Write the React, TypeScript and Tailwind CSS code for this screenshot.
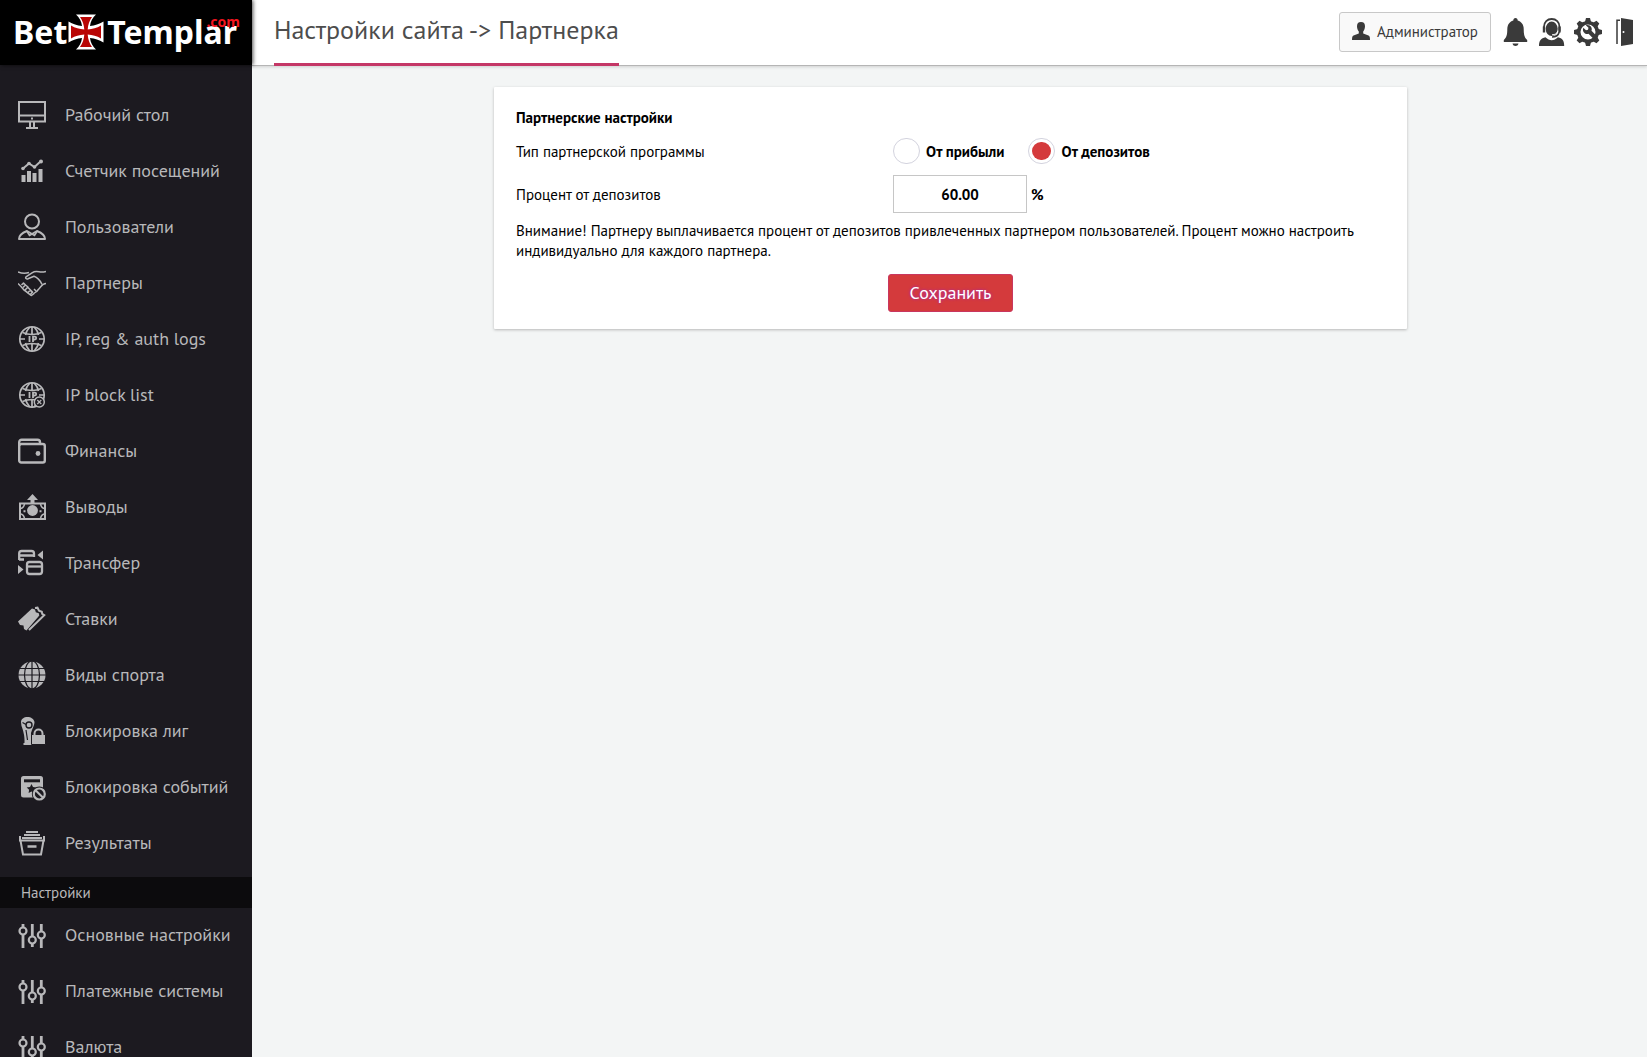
import { useState, type ReactNode } from "react";

// ─── Icons ───────────────────────────────────────────────────────────────────
function Icon({ children }: { children: ReactNode }) {
  return (
    <svg
      viewBox="0 0 28 28"
      className="size-7 shrink-0"
      fill="none"
      stroke="currentColor"
      strokeWidth="2"
      aria-hidden="true"
    >
      {children}
    </svg>
  );
}

function DesktopIcon() {
  return (
    <Icon>
      <path d="M1 1h26v19.5H1zM1 14.5h26" />
      <path d="M12 21v5M16 21v5M8 27h12M14 16.5v2" />
    </Icon>
  );
}

function CounterIcon() {
  return (
    <Icon>
      <path d="M5.5 18v7M11 14v11M16.5 16v9M22.5 12v13" strokeWidth="4" />
      <path d="M5 11.5l6-5 5.5 3.5 6.5-6" />
      <g fill="currentColor" stroke="none">
        <circle cx="5" cy="11.5" r="1.8" />
        <circle cx="11" cy="6.5" r="1.8" />
        <circle cx="16.5" cy="10" r="1.8" />
        <circle cx="23" cy="4.5" r="2" />
      </g>
    </Icon>
  );
}

function UsersIcon() {
  return (
    <Icon>
      <circle cx="14" cy="8.5" r="7" />
      <path d="M1 26c0-4 3-6 8-8l5 3 5-3c5 2 8 4 8 8z" strokeLinejoin="round" />
      <path d="M9 18.5l2.5 4L14 21l2.5 1.5 2.5-4" strokeWidth="1.5" />
    </Icon>
  );
}

function PartnersIcon() {
  return (
    <Icon>
      <g strokeWidth="1.5" strokeLinejoin="round">
        <path d="M0 3c4 1.5 8 1.5 11 .5M28 2.500c-3 .8-5 .8-7 .3-3-.8-5-.3-7 1l-6 4c-1 1.500.5 2.500 2 2l6-2.500c3 1 6 4 8 8" />
        <path d="M28 14.500c-3 0-4 1.500-5.500 3.500s-2 2-3 3.500-3 2-4 3.500l-2 1.500c-2-1-5-4-7.500-5.500L3 17.500 0 14.500" />
        <path d="M3.500 16l2-2 2 2-2.500 2.500M7.500 16l2.500 2-3 3M10 18.500l2.500 2.500-3 3M12.500 21l2 2-2.500 3M15 24l-2-2M18 22l-2-2" />
      </g>
    </Icon>
  );
}

function IpGlobe() {
  return (
    <>
      <g strokeWidth="1.7">
        <circle cx="14" cy="14" r="12.2" />
        <path d="M14 2v7M14 19v7M2 14h5M21 14h5M4.500 7.500c6 2.500 13 2.500 19 0M4.500 20.500c6-2.500 13-2.500 19 0" />
        <path d="M11.500 2.500C9 5 8 7 7.500 10M16.500 2.500C19 5 20 7 20.500 10M7.500 18c.5 3 1.500 5 4 7.500M20.500 18c-.5 3-1.500 5-4 7.500" />
      </g>
      <path d="M11.5 11v6M15 17v-5.300h1.800a1.300 1.300 0 010 2.800H15" strokeWidth="1.8" />
    </>
  );
}

function IpLogsIcon() {
  return (
    <Icon>
      <IpGlobe />
    </Icon>
  );
}

function IpBlockIcon() {
  return (
    <Icon>
      <IpGlobe />
      <circle cx="21.3" cy="21" r="5" fill="#1c1a20" strokeWidth="1.5" />
      <path d="M19.300 19l4 4M23.300 19l-4 4" strokeWidth="1.2" />
    </Icon>
  );
}

function WalletIcon() {
  return (
    <Icon>
      <g strokeWidth="2.4">
        <rect x="1.2" y="7" width="25.6" height="18.5" rx="2" />
        <path d="M1.200 9V5.200a2.500 2.500 0 012.500-2.500H19.500A2.500 2.500 0 0122 5.200V7" />
      </g>
      <circle cx="20" cy="16.5" r="2.4" fill="currentColor" stroke="none" />
    </Icon>
  );
}

function PayoutIcon() {
  return (
    <Icon>
      <rect x="2" y="10.5" width="25" height="15.5" />
      <circle cx="14.5" cy="17.5" r="5.4" fill="currentColor" stroke="none" />
      <path d="M14.500 1l5.500 6h-3.500v4h-4V7H9z" fill="currentColor" stroke="none" />
      <path d="M2 15.500c3 0 4-2 4.500-4.500M27 15.500c-3 0-4-2-4.500-4.500M2 21c3 0 4 2 4.500 4.500M27 21c-3 0-4 2-4.500 4.500" strokeWidth="1.5" />
      <path d="M5.500 18.300h2M21.500 18.300h2" />
    </Icon>
  );
}

function TransferIcon() {
  return (
    <Icon>
      <g strokeWidth="2.3">
        <path d="M1.200 11V4.500A2.500 2.500 0 013.700 2h9.800A2.500 2.500 0 0116 4.500V8M1 6.500h15M1 10.500h5" />
        <rect x="9" y="13" width="15" height="12" rx="2.5" />
        <path d="M9 17.500h15" />
      </g>
      <path d="M19.500 6L25 1.500v9zM5.500 20.500L0 16v9z" fill="currentColor" stroke="none" />
    </Icon>
  );
}

function TicketIcon() {
  return (
    <Icon>
      <path d="M0 16.500L14 3.500l3 1 .8 2.800 3 1 .5 2.200L8.500 25.500l-2.500-1.500-.5-3.500-3.500-.5z" fill="currentColor" stroke="none" />
      <path d="M17 3l2.500-.3 1.500 3 2.800 1 .4 2.200 2 1.200L11 25" strokeWidth="2" />
    </Icon>
  );
}

function SportIcon() {
  return (
    <Icon>
      <circle cx="14" cy="14" r="13.5" fill="currentColor" stroke="none" />
      <g stroke="#1c1a20" strokeWidth="1.2">
        <path d="M14 0v28M0 14h28M2 7.500h24M2 20.500h24" />
        <ellipse cx="14" cy="14" rx="7.5" ry="14" />
      </g>
    </Icon>
  );
}

function LeagueBlockIcon() {
  return (
    <Icon>
      <path d="M3 5c0-3 3-5 6.500-5S16 2 16.500 5c0 3-1.500 5-2.500 8l-1 3v10h1v2H5.500v-2h1C7 19 5 13 3.500 9z" fill="currentColor" stroke="none" />
      <circle cx="11" cy="8" r="3" stroke="#1c1a20" strokeWidth="1.4" />
      <path d="M4.500 5.500l3.500 2M8 13l1.500 10" stroke="#1c1a20" strokeWidth="1.2" />
      <path d="M13.500 17.500h14v10h-14z" fill="currentColor" stroke="#1c1a20" strokeWidth="1" />
      <path d="M16.500 18v-1.500a4 4 0 018 0V18" />
    </Icon>
  );
}

function EventBlockIcon() {
  return (
    <Icon>
      <rect x="3" y="3" width="22" height="21.5" rx="2.5" fill="currentColor" stroke="none" />
      <path d="M6 7.800h16" stroke="#1c1a20" strokeWidth="3" />
      <path d="M13.500 11l1.500 3 3.300.4-2.400 2.300.5 3.300-2.900-1.600-2.900 1.600.5-3.300-2.400-2.300 3.300-.4z" fill="#1c1a20" stroke="none" />
      <circle cx="21.3" cy="21" r="7.5" fill="#1c1a20" stroke="none" />
      <circle cx="21.3" cy="21" r="5.5" strokeWidth="2.2" />
      <path d="M17.500 17.200l7.600 7.600" />
    </Icon>
  );
}

function ResultsIcon() {
  return (
    <Icon>
      <path d="M8 3h12M6 6h16M4 9h20" strokeWidth="1.8" />
      <path d="M2 7v4.500h24V7M2.500 11.500L5 25.500h18l2.500-14" />
      <path d="M9.500 17.500h9" strokeWidth="2.5" />
    </Icon>
  );
}

function SlidersIcon() {
  return (
    <Icon>
      <path d="M5 3v3.500M5 13.500V27M14.300 3v12.500M14.300 22.500V26M23.300 3v7.500M23.300 17.500V27" strokeWidth="2.8" />
      <g strokeWidth="2.2">
        <circle cx="5" cy="10" r="3.5" />
        <circle cx="14.3" cy="19" r="3.5" />
        <circle cx="23.3" cy="14" r="3.5" />
      </g>
    </Icon>
  );
}

function BellIcon() {
  return (
    <Icon>
      <g fill="currentColor" stroke="none">
        <path d="M13.500 0c1.400 0 2.200.9 2.200 2.400 4 1.300 6 4.300 6 8.600 0 6 .8 8.500 3.500 11v2H1.800v-2c2.700-2.500 3.500-5 3.500-11 0-4.300 2-7.300 6-8.600C11.300.9 12.100 0 13.500 0z" />
        <path d="M10.500 25.500h6c-.5 1.800-1.600 2.500-3 2.500s-2.500-.7-3-2.500z" />
      </g>
    </Icon>
  );
}

function SupportIcon() {
  return (
    <Icon>
      <path d="M1 28c0-5.500 2-7.500 6.500-8.700 2 2 4 2.900 6.200 2.900s4.200-.9 6.200-2.900c4.500 1.200 6.300 3.200 6.300 8.700z" fill="currentColor" stroke="none" />
      <ellipse cx="13.7" cy="10.8" rx="6" ry="7.2" fill="currentColor" stroke="none" />
      <path d="M6 13V8.800C6 4.200 9.300 1 13.700 1s7.800 3.200 7.800 7.800V13" strokeWidth="1.8" />
      <path d="M6 8.500v6M21.500 8.500v6" strokeWidth="2.4" />
      <path d="M14 16.800c3 0 5-1.300 6-4" stroke="white" strokeWidth="1" />
      <path d="M21.200 14c-.8 3.300-3.400 5-7.200 5" strokeWidth="1.6" />
    </Icon>
  );
}

function GearIcon() {
  return (
    <Icon>
      <circle cx="14" cy="14" r="9.3" strokeWidth="3.6" />
      <g fill="currentColor" stroke="none">
        <path d="M12 0h4l1.200 4.500h-6.400zM12 28h4l1.200-4.500h-6.400zM0 12v4l4.500 1.200v-6.400zM28 12v4l-4.500 1.200v-6.400z" />
        <path d="M5.500 2.700L2.700 5.500 5 9.500 9.500 5zM22.500 2.700l2.800 2.800L23 9.500 18.500 5zM5.500 25.300l-2.800-2.800L5 18.500 9.500 23zM22.500 25.300l2.800-2.800-2.300-4-4.500 4.500z" />
        <path d="M9.300 9.700l2.700 2.600 2-.5.500-2-2.700-2.600c2.300-.7 4.500.2 5.500 2.100.6 1.200.6 2.300.2 3.500l4.700 4.700-3 3-4.700-4.700c-1.200.4-2.400.3-3.500-.4-1.900-1.200-2.600-3.500-1.700-5.700z" />
      </g>
    </Icon>
  );
}

function DoorIcon() {
  return (
    <Icon>
      <path d="M11 0l12 2v24l-12 2z" fill="currentColor" stroke="none" />
      <path d="M10 2.200H7V26" strokeWidth="1.5" />
      <circle cx="13.5" cy="14" r="1" fill="white" stroke="none" />
    </Icon>
  );
}

function PersonIcon() {
  return (
    <svg viewBox="0 0 18 18" className="mb-0.5 size-[18px] shrink-0" fill="currentColor" aria-hidden="true">
      <path d="M9 0c2.800 0 4 1.600 4 4.200 0 2.300-.8 4-1.800 5.200v2l5.300 2.200c1 .5 1.500 1.600 1.500 4.400H0c0-2.800.5-3.900 1.500-4.400l5.300-2.200v-2C5.800 8.200 5 6.500 5 4.200 5 1.600 6.200 0 9 0z" />
    </svg>
  );
}

// ─── Sidebar ─────────────────────────────────────────────────────────────────
const mainItems = [
  { label: "Рабочий стол", icon: <DesktopIcon /> },
  { label: "Счетчик посещений", icon: <CounterIcon /> },
  { label: "Пользователи", icon: <UsersIcon /> },
  { label: "Партнеры", icon: <PartnersIcon /> },
  { label: "IP, reg & auth logs", icon: <IpLogsIcon /> },
  { label: "IP block list", icon: <IpBlockIcon /> },
  { label: "Финансы", icon: <WalletIcon /> },
  { label: "Выводы", icon: <PayoutIcon /> },
  { label: "Трансфер", icon: <TransferIcon /> },
  { label: "Ставки", icon: <TicketIcon /> },
  { label: "Виды спорта", icon: <SportIcon /> },
  { label: "Блокировка лиг", icon: <LeagueBlockIcon /> },
  { label: "Блокировка событий", icon: <EventBlockIcon /> },
  { label: "Результаты", icon: <ResultsIcon /> },
];

const settingsItems = [
  { label: "Основные настройки", icon: <SlidersIcon /> },
  { label: "Платежные системы", icon: <SlidersIcon /> },
  { label: "Валюта", icon: <SlidersIcon /> },
];

function NavRow({ label, icon }: { label: string; icon: ReactNode }) {
  return (
    <li>
      <a
        href="#"
        className="flex h-14 items-center gap-[19px] px-[18px] pb-0.5 text-lg leading-5 whitespace-nowrap text-[#b8b8ba] hover:text-white"
      >
        {icon}
        <span>{label}</span>
      </a>
    </li>
  );
}

function Logo() {
  return (
    <a
      href="#"
      className="relative z-10 flex h-[65px] shrink-0 items-center bg-black pb-0.5 pl-[13px] font-['Noto_Sans'] text-[32px] leading-none font-bold text-white shadow-[1px_0_4px_rgba(0,0,0,0.7)]"
    >
      Bet
      <svg viewBox="0 0 38 38" className="mr-0.5 size-[38px] shrink-0" aria-hidden="true">
        <path
          d="M9 1.500h20c-3.500 3-5.500 7-6 11.500 5-.5 9-2 13.500-4.500v21C32 27 28 25.500 23 25c.5 4.500 2.500 8.500 6 11.500H9c3.500-3 5.500-7 6-11.500-5 .5-9 2-13.500 4.500v-21C6 11 10 12.500 15 13c-.5-4.500-2.500-8.500-6-11.500z"
          fill="white"
        />
        <path
          d="M13 4h12c-2.500 3.500-4 7.500-4.300 12.500 5-.3 9-1.500 13.300-4v13c-4.300-2.500-8.300-3.700-13.300-4C21 26.500 22.500 30.500 25 34H13c2.500-3.500 4-7.500 4.300-12.500-5 .3-9 1.500-13.300 4v-13c4.300 2.500 8.300 3.700 13.300 4C17 11.500 15.500 7.500 13 4z"
          fill="#b90504"
        />
      </svg>
      Templar
      <span className="absolute top-[15px] right-3 text-sm leading-none text-[#f5151f]">.com</span>
    </a>
  );
}

function Sidebar() {
  return (
    <aside className="flex w-[252px] shrink-0 flex-col bg-[#1c1a20]">
      <Logo />
      <nav className="min-h-0 flex-1 overflow-hidden pt-[23px]">
        <ul>
          {mainItems.map((item) => (
            <NavRow key={item.label} {...item} />
          ))}
        </ul>
        <h2 className="mt-[5px] bg-[#0c0b0d] px-[21px] py-1.5 text-[15px] leading-[19px] text-[#b8b8ba]">
          Настройки
        </h2>
        <ul>
          {settingsItems.map((item) => (
            <NavRow key={item.label} {...item} />
          ))}
        </ul>
      </nav>
    </aside>
  );
}

// ─── Header ──────────────────────────────────────────────────────────────────
function Header() {
  return (
    <header className="flex h-[66px] shrink-0 items-stretch justify-between border-b border-[#b5b5b5] bg-white pr-[9px] pl-[22px] shadow-[0_1px_3px_rgba(0,0,0,0.15)]">
      <h1 className="-mb-px border-b-3 border-[#c43766] text-[26px] leading-[60px] text-[#4d4d4d]">
        Настройки сайта -&gt; Партнерка
      </h1>
      <div className="flex items-center gap-2 pb-0.5 text-[#3a3a3a]">
        <button className="mr-[3px] flex h-10 items-center gap-[7px] rounded-[3px] border border-[#c8c8c8] bg-[#f9f9f9] px-3 text-[15px]">
          <PersonIcon />
          <span className="pt-0.5">Администратор</span>
        </button>
        <button aria-label="Уведомления">
          <BellIcon />
        </button>
        <button aria-label="Поддержка">
          <SupportIcon />
        </button>
        <button aria-label="Настройки">
          <GearIcon />
        </button>
        <button aria-label="Выход">
          <DoorIcon />
        </button>
      </div>
    </header>
  );
}

// ─── Partner settings form ───────────────────────────────────────────────────
const programTypes = [
  { value: "profit", label: "От прибыли" },
  { value: "deposits", label: "От депозитов" },
];

function PartnerForm() {
  const [type, setType] = useState("deposits");
  const [percent, setPercent] = useState("60.00");

  return (
    <form
      onSubmit={(e) => e.preventDefault()}
      className="w-full max-w-[913px] rounded-[1px] bg-white px-[22px] pt-[21px] pb-[17px] text-[15px] leading-5 text-black shadow-[0_1px_3px_rgba(0,0,0,0.25)]"
    >
      <h2 className="font-bold">Партнерские настройки</h2>

      <div className="mt-2.5 flex items-center" role="radiogroup" aria-labelledby="type-label">
        <span id="type-label" className="w-[377px] shrink-0 pt-0.5">
          Тип партнерской программы
        </span>
        <div className="flex gap-6">
          {programTypes.map((t) => (
            <label key={t.value} className="flex items-center gap-1.5 font-bold">
              <input
                type="radio"
                name="type"
                value={t.value}
                checked={type === t.value}
                onChange={() => setType(t.value)}
                className="h-[26px] w-[27px] appearance-none rounded-full border border-[#d3d3de] bg-clip-content p-[3px] checked:bg-[#d43a3c]"
              />
              <span className="pt-0.5">{t.label}</span>
            </label>
          ))}
        </div>
      </div>

      <div className="mt-[11px] flex items-center">
        <label htmlFor="percent" className="w-[377px] shrink-0 pt-0.5">
          Процент от депозитов
        </label>
        <input
          id="percent"
          type="text"
          value={percent}
          onChange={(e) => setPercent(e.target.value)}
          className="h-[38px] w-[134px] border border-[#c6c6c6] text-center font-bold outline-none"
        />
        <span className="ml-1 pt-0.5 font-bold">%</span>
      </div>

      <p className="mt-2">
        Внимание! Партнеру выплачивается процент от депозитов привлеченных партнером пользователей. Процент можно
        настроить индивидуально для каждого партнера.
      </p>

      <div className="mt-[13px] flex justify-center">
        <button
          type="submit"
          className="h-[38px] w-[125px] rounded-[3px] border border-[#c9375f] bg-[#d43a3c] text-lg leading-6 text-white [text-shadow:0_0_3px_#a020c0]"
        >
          Сохранить
        </button>
      </div>
    </form>
  );
}

export default function App() {
  return (
    <div className="flex h-screen overflow-hidden bg-[#f3f5f5] font-['PT_Sans','Lato','Noto_Sans',sans-serif]">
      <Sidebar />
      <div className="flex min-w-0 flex-1 flex-col">
        <Header />
        <main className="flex flex-1 items-start justify-center pt-[21px] pr-6 pl-[26px]">
          <PartnerForm />
        </main>
      </div>
    </div>
  );
}
